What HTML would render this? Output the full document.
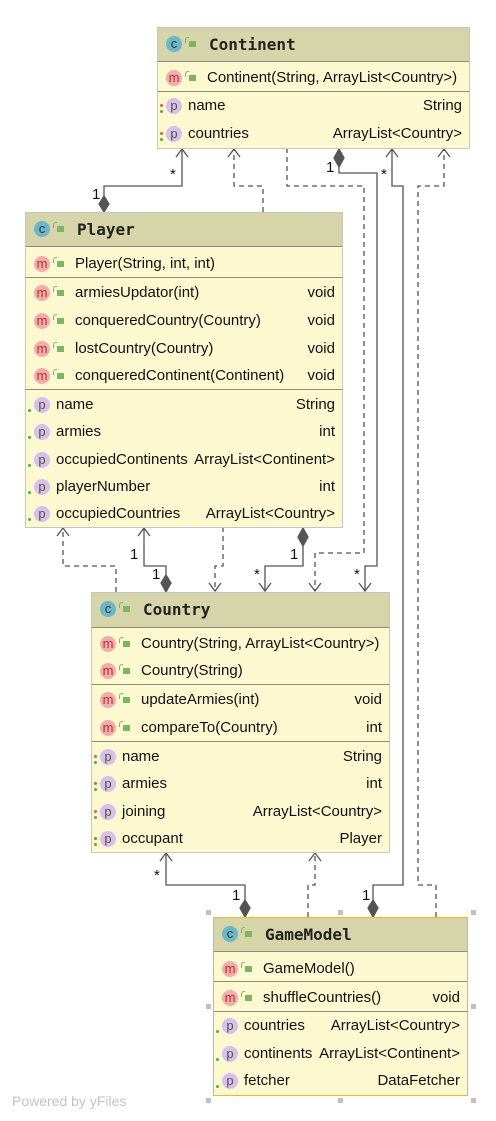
<!DOCTYPE html>
<html><head><meta charset="utf-8">
<style>
*{margin:0;padding:0;box-sizing:border-box}
body{width:496px;height:1121px;background:#fff;position:relative;overflow:hidden;font-family:"Liberation Sans",sans-serif;color:#111}
.b{position:absolute;background:#fcf8d0;border:1px solid #c6c6c0}
.h{position:absolute;left:0;right:0;top:0;background:#d6d5a9;border-bottom:1px solid #8a8a80}
.h span{position:absolute;left:51px;top:0;font-family:"DejaVu Sans Mono","Liberation Mono",monospace;font-weight:bold;font-size:16px;color:#222}
.s{position:absolute;left:0;right:0;height:1px;background:#8a8a80}
.r{position:absolute;left:0;right:0;height:26px;line-height:26px;font-size:15px;white-space:nowrap}
.r .n{position:absolute;left:49px}
.r .pn{position:absolute;left:30px}
.r .t{position:absolute;right:7px}
.ic{position:absolute;left:8px;top:5px;width:16px;height:16px;border-radius:50%;font-size:13px;line-height:15px;text-align:center;color:#333}
.c{background:#6ab7c7}
.m{background:#f4acab;color:#a33}
.p{background:#d7bfee;color:#553}
.lk{position:absolute;left:31px;top:10px;width:7px;height:6px;background:#79b861}
.lk:before{content:"";position:absolute;left:-4px;top:-4px;width:3px;height:5px;border:1.5px solid #79b861;border-right:none;border-bottom:none;border-radius:3px 0 0 0}
.d1{position:absolute;left:2px;top:11px;width:3px;height:3px;background:#e06030;border-radius:50%}
.d2{position:absolute;left:2px;top:17px;width:3px;height:3px;background:#4caf50;border-radius:50%}
.hd{position:absolute;width:5px;height:5px;background:#c0c0c0}
</style></head><body>

<svg width="496" height="1121" style="position:absolute;left:0;top:0" fill="none" stroke="#555" stroke-width="1.3">
<polyline points="104,196 104,186 182,186 182,149"/>
<polyline points="176,157 182,149 188,157"/>
<polygon points="104,196 99,204 104,212 109,204" fill="#555"/>
<polyline points="263,212 263,186 234,186 234,149" stroke-dasharray="5,4"/>
<polyline points="228,157 234,149 240,157"/>
<polyline points="287,148 287,186 364,186 364,553 315,553 315,591" stroke-dasharray="5,4"/>
<polyline points="309,583 315,591 321,583"/>
<polygon points="339,149 334,158 339,167 344,158" fill="#555"/>
<polyline points="339,167 339,173 377,173 377,566 365,566 365,591"/>
<polyline points="359,583 365,591 371,583"/>
<polyline points="373,900 373,885 403,885 403,186 392,186 392,149"/>
<polyline points="386,157 392,149 398,157"/>
<polygon points="373,900 368,908 373,917 378,908" fill="#555"/>
<polyline points="436,917 436,885 418,885 418,186 444,186 444,149" stroke-dasharray="5,4"/>
<polyline points="438,157 444,149 450,157"/>
<polyline points="116,592 116,566 63,566 63,528" stroke-dasharray="5,4"/>
<polyline points="57,536 63,528 69,536"/>
<polyline points="166,575 166,566 144,566 144,528"/>
<polyline points="138,536 144,528 150,536"/>
<polygon points="166,575 161,583 166,592 171,583" fill="#555"/>
<polyline points="223,527 223,566 215,566 215,591" stroke-dasharray="5,4"/>
<polyline points="209,583 215,591 221,583"/>
<polygon points="303,528 298,537 303,546 308,537" fill="#555"/>
<polyline points="303,546 303,566 265,566 265,591"/>
<polyline points="259,583 265,591 271,583"/>
<polyline points="245,900 245,885 166,885 166,853"/>
<polyline points="160,861 166,853 172,861"/>
<polygon points="245,900 240,908 245,917 250,908" fill="#555"/>
<polyline points="308,917 308,885 315,885 315,853" stroke-dasharray="5,4"/>
<polyline points="309,861 315,853 321,861"/>
<g fill="#111" stroke="none" font-family="Liberation Sans,sans-serif" font-size="15">
<text x="170" y="179">*</text><text x="92" y="199">1</text>
<text x="326" y="172">1</text><text x="381" y="179">*</text>
<text x="130" y="559">1</text><text x="152" y="579">1</text>
<text x="290" y="559">1</text><text x="254" y="579">*</text><text x="354" y="579">*</text>
<text x="154" y="880">*</text><text x="232" y="900">1</text><text x="362" y="900">1</text>
</g>
</svg>

<div class="b" style="left:157px;top:27px;width:313px;height:122px">
<div class="h" style="height:34px"><div class="ic c" style="top:8px">c</div><div class="lk" style="top:13px"></div><span style="line-height:33px">Continent</span></div>
<div class="r" style="top:37px"><div class="ic m">m</div><div class="lk"></div><span class="n">Continent(String, ArrayList&lt;Country&gt;)</span></div>
<div class="s" style="top:63px"></div>
<div class="r" style="top:65px"><div class="d1"></div><div class="d2"></div><div class="ic p">p</div><span class="pn">name</span><span class="t">String</span></div>
<div class="r" style="top:93px"><div class="d1"></div><div class="d2"></div><div class="ic p">p</div><span class="pn">countries</span><span class="t">ArrayList&lt;Country&gt;</span></div>
</div>

<div class="b" style="left:25px;top:212px;width:318px;height:316px">
<div class="h" style="height:34px"><div class="ic c" style="top:8px">c</div><div class="lk" style="top:13px"></div><span style="line-height:33px">Player</span></div>
<div class="r" style="top:38px"><div class="ic m">m</div><div class="lk"></div><span class="n">Player(String, int, int)</span></div>
<div class="s" style="top:64px"></div>
<div class="r" style="top:67px"><div class="ic m">m</div><div class="lk"></div><span class="n">armiesUpdator(int)</span><span class="t">void</span></div>
<div class="r" style="top:95px"><div class="ic m">m</div><div class="lk"></div><span class="n">conqueredCountry(Country)</span><span class="t">void</span></div>
<div class="r" style="top:123px"><div class="ic m">m</div><div class="lk"></div><span class="n">lostCountry(Country)</span><span class="t">void</span></div>
<div class="r" style="top:150px"><div class="ic m">m</div><div class="lk"></div><span class="n">conqueredContinent(Continent)</span><span class="t">void</span></div>
<div class="s" style="top:176px"></div>
<div class="r" style="top:179px"><div class="d2"></div><div class="ic p">p</div><span class="pn">name</span><span class="t">String</span></div>
<div class="r" style="top:206px"><div class="d2"></div><div class="ic p">p</div><span class="pn">armies</span><span class="t">int</span></div>
<div class="r" style="top:234px"><div class="d2"></div><div class="ic p">p</div><span class="pn">occupiedContinents</span><span class="t">ArrayList&lt;Continent&gt;</span></div>
<div class="r" style="top:261px"><div class="d2"></div><div class="ic p">p</div><span class="pn">playerNumber</span><span class="t">int</span></div>
<div class="r" style="top:288px"><div class="d2"></div><div class="ic p">p</div><span class="pn">occupiedCountries</span><span class="t">ArrayList&lt;Country&gt;</span></div>
</div>

<div class="b" style="left:91px;top:592px;width:299px;height:261px">
<div class="h" style="height:35px"><div class="ic c" style="top:8px">c</div><div class="lk" style="top:13px"></div><span style="line-height:34px">Country</span></div>
<div class="r" style="top:38px"><div class="ic m">m</div><div class="lk"></div><span class="n">Country(String, ArrayList&lt;Country&gt;)</span></div>
<div class="r" style="top:65px"><div class="ic m">m</div><div class="lk"></div><span class="n">Country(String)</span></div>
<div class="s" style="top:91px"></div>
<div class="r" style="top:94px"><div class="ic m">m</div><div class="lk"></div><span class="n">updateArmies(int)</span><span class="t">void</span></div>
<div class="r" style="top:122px"><div class="ic m">m</div><div class="lk"></div><span class="n">compareTo(Country)</span><span class="t">int</span></div>
<div class="s" style="top:148px"></div>
<div class="r" style="top:151px"><div class="d1"></div><div class="d2"></div><div class="ic p">p</div><span class="pn">name</span><span class="t">String</span></div>
<div class="r" style="top:178px"><div class="d1"></div><div class="d2"></div><div class="ic p">p</div><span class="pn">armies</span><span class="t">int</span></div>
<div class="r" style="top:206px"><div class="d1"></div><div class="d2"></div><div class="ic p">p</div><span class="pn">joining</span><span class="t">ArrayList&lt;Country&gt;</span></div>
<div class="r" style="top:233px"><div class="d1"></div><div class="d2"></div><div class="ic p">p</div><span class="pn">occupant</span><span class="t">Player</span></div>
</div>

<div class="b" style="left:213px;top:917px;width:255px;height:179px;border-color:#f2b820">
<div class="h" style="height:34px"><div class="ic c" style="top:8px">c</div><div class="lk" style="top:13px"></div><span style="line-height:33px">GameModel</span></div>
<div class="r" style="top:38px"><div class="ic m">m</div><div class="lk"></div><span class="n">GameModel()</span></div>
<div class="s" style="top:63px"></div>
<div class="r" style="top:67px"><div class="ic m">m</div><div class="lk"></div><span class="n">shuffleCountries()</span><span class="t">void</span></div>
<div class="s" style="top:93px"></div>
<div class="r" style="top:95px"><div class="d2"></div><div class="ic p">p</div><span class="pn">countries</span><span class="t">ArrayList&lt;Country&gt;</span></div>
<div class="r" style="top:123px"><div class="d2"></div><div class="ic p">p</div><span class="pn">continents</span><span class="t">ArrayList&lt;Continent&gt;</span></div>
<div class="r" style="top:150px"><div class="d2"></div><div class="ic p">p</div><span class="pn">fetcher</span><span class="t">DataFetcher</span></div>
</div>

<div class="hd" style="left:206px;top:910px"></div><div class="hd" style="left:338px;top:910px"></div><div class="hd" style="left:471px;top:910px"></div>
<div class="hd" style="left:206px;top:1004px"></div><div class="hd" style="left:471px;top:1004px"></div>
<div class="hd" style="left:206px;top:1098px"></div><div class="hd" style="left:338px;top:1098px"></div><div class="hd" style="left:471px;top:1098px"></div>

<div style="position:absolute;left:12px;top:1093px;font-size:14px;color:#c4c4c4">Powered by yFiles</div>
</body></html>
